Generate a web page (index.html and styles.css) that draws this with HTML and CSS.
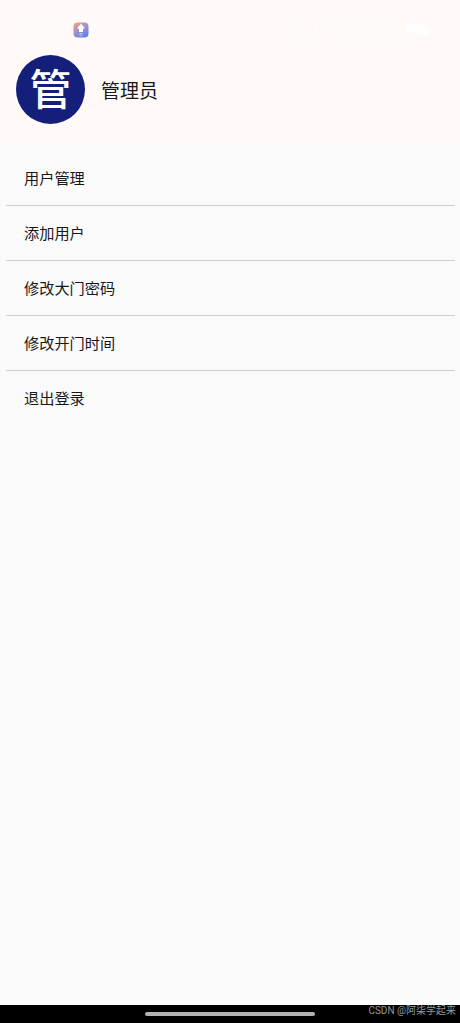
FILE: index.html
```html
<!DOCTYPE html>
<html lang="zh-CN">
<head>
    <meta charset="UTF-8">
    <meta name="viewport" content="width=device-width, initial-scale=1.0">
    <title>管理员</title>
    <link rel="stylesheet" href="styles.css">
</head>
<body>
    <header class="header">
        <!-- Status bar -->
        <div class="status-bar">
            <span class="time">22:51</span>
            <svg class="app-icon" width="16" height="16" viewBox="0 0 16 16">
                <defs>
                    <linearGradient id="appBg" x1="0.1" y1="0" x2="0.7" y2="1">
                        <stop offset="0" stop-color="#f0a08c"/>
                        <stop offset="0.5" stop-color="#a191c4"/>
                        <stop offset="1" stop-color="#5f82ee"/>
                    </linearGradient>
                </defs>
                <rect x="0.5" y="0.5" width="15" height="15" rx="4" fill="url(#appBg)"/>
                <path d="M8 1.8L12.2 6.6H10V10H6V6.6H3.8Z" fill="#fff"/>
                <path d="M6.4 11.5H9.6M6.4 13.2H9.6" stroke="#b5c4f7" stroke-width="1"/>
            </svg>
            <svg class="status-icons" width="142" height="16" viewBox="0 0 142 16" fill="none" stroke="#fffdfb" stroke-width="1.5">
                <path d="M1 5L13 12M3 11V7L7 4L12 7V11"/>
                <path d="M26 3V13L36 10L28 5"/>
                <path d="M49 4L57 11L53 14V2L57 5L49 12"/>
                <path d="M70 3V13M74 13V6H79V13M83 13V6H88V13"/>
                <path d="M94 6Q101 0 108 6M97 9Q101 5 105 9M100 12H102"/>
                <rect x="117" y="3" width="20" height="10" rx="3" fill="#fffefe"/>
                <path d="M140 6V10"/>
            </svg>
        </div>

        <!-- Current user -->
        <div class="profile">
            <div class="avatar">管</div>
            <div class="name">管理员</div>
        </div>
    </header>

    <ul class="menu">
        <li class="menu-item">用户管理</li>
        <li class="menu-item">添加用户</li>
        <li class="menu-item">修改大门密码</li>
        <li class="menu-item">修改开门时间</li>
        <li class="menu-item">退出登录</li>
    </ul>

    <footer class="nav-bar">
        <div class="home-handle"></div>
        <span class="credit">CSDN @阿柒学起来</span>
    </footer>
</body>
</html>
```
FILE: styles.css
```css
* {
    box-sizing: border-box;
}

body {
    display: flex;
    flex-direction: column;
    height: 1023px;
    margin: 0;
    background-color: #fafafa;
    color: #181818;
    font-family: "Noto Sans CJK SC", sans-serif;
}

.header {
    height: 143px;
    padding-top: 22px;
    background-color: #fffaf8;
}

.status-bar {
    display: flex;
    align-items: center;
    height: 16px;
    padding: 0 28px 0 27px;
}

.time {
    width: 46px;
    color: #fffdfb;
    font-family: Roboto, sans-serif;
    font-size: 14px;
}

.status-icons {
    margin-left: auto;
}

.profile {
    display: flex;
    align-items: center;
    gap: 16px;
    margin-top: 17px;
    padding-left: 16px;
}

.avatar {
    width: 69px;
    height: 69px;
    border-radius: 50%;
    background-color: #141f7c;
    color: #fff;
    font-size: 42px;
    font-weight: 500;
    line-height: 63px;
    text-align: center;
}

.name {
    font-size: 19px;
    line-height: 28px;
}

.menu {
    flex: 1;
    margin: 0;
    padding: 8px 5px 0 6px;
    border-bottom: 5px solid #fff;
    list-style: none;
}

.menu-item {
    height: 55px;
    padding-left: 18px;
    border-bottom: 1px solid #d0d0d0;
    font-size: 15.2px;
    line-height: 52px;
}

.menu-item:last-child {
    border-bottom: none;
}

.nav-bar {
    position: relative;
    display: flex;
    justify-content: center;
    height: 18px;
    background-color: #000;
}

.home-handle {
    width: 170px;
    height: 4px;
    margin-top: 7px;
    border-radius: 2px;
    background-color: #b2b2b2;
}

.credit {
    position: absolute;
    top: -1px;
    right: 4px;
    color: #999;
    font-family: Roboto, "Noto Sans CJK SC", sans-serif;
    font-size: 10px;
    line-height: 14px;
}
```
